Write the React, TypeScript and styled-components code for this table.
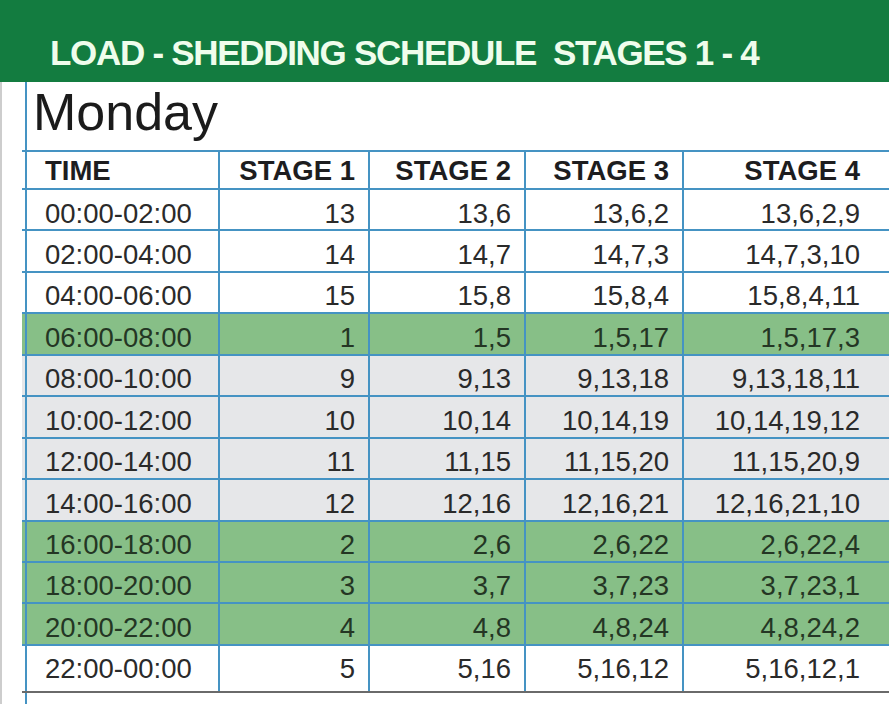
import React from 'react';
import styled, { createGlobalStyle, css } from 'styled-components';

const GlobalStyle = createGlobalStyle`
	html, body {
		margin: 0;
		padding: 0;
		background: #ffffff;
	}
	body {
		font-family: "Liberation Sans", Arial, sans-serif;
		overflow: hidden;
	}
`;

const LINE = '#4593c3';

type Tone = 'white' | 'green' | 'gray';

type Slot = {
	time: string,
	stages: string[],
	tone: Tone,
};

const SLOTS: Slot[] = [
	{ time: '00:00-02:00', stages: ['13', '13,6', '13,6,2', '13,6,2,9'], tone: 'white' },
	{ time: '02:00-04:00', stages: ['14', '14,7', '14,7,3', '14,7,3,10'], tone: 'white' },
	{ time: '04:00-06:00', stages: ['15', '15,8', '15,8,4', '15,8,4,11'], tone: 'white' },
	{ time: '06:00-08:00', stages: ['1', '1,5', '1,5,17', '1,5,17,3'], tone: 'green' },
	{ time: '08:00-10:00', stages: ['9', '9,13', '9,13,18', '9,13,18,11'], tone: 'gray' },
	{ time: '10:00-12:00', stages: ['10', '10,14', '10,14,19', '10,14,19,12'], tone: 'gray' },
	{ time: '12:00-14:00', stages: ['11', '11,15', '11,15,20', '11,15,20,9'], tone: 'gray' },
	{ time: '14:00-16:00', stages: ['12', '12,16', '12,16,21', '12,16,21,10'], tone: 'gray' },
	{ time: '16:00-18:00', stages: ['2', '2,6', '2,6,22', '2,6,22,4'], tone: 'green' },
	{ time: '18:00-20:00', stages: ['3', '3,7', '3,7,23', '3,7,23,1'], tone: 'green' },
	{ time: '20:00-22:00', stages: ['4', '4,8', '4,8,24', '4,8,24,2'], tone: 'green' },
	{ time: '22:00-00:00', stages: ['5', '5,16', '5,16,12', '5,16,12,1'], tone: 'white' },
];

const toneBg: Record<Tone, string> = {
	white: '#ffffff',
	green: '#87bf87',
	gray: '#e6e7e9',
};

const toneInk: Record<Tone, string> = {
	white: '#2a2a2a',
	green: '#243624',
	gray: '#2a2a2a',
};

const Page = styled.div`
	width: 889px;
	height: 704px;
	display: flex;
	flex-direction: column;
	overflow: hidden;
`;

const Banner = styled.header`
	height: 82px;
	flex: none;
	box-sizing: border-box;
	padding: 35px 0 0 50px;
	background: #137c40;
`;

const BannerTitle = styled.h1`
	margin: 0;
	font-size: 35px;
	line-height: 35px;
	font-weight: 700;
	letter-spacing: -1.3px;
	white-space: pre;
	color: #effdec;
`;

const Paper = styled.main`
	flex: 1;
	display: flex;
	padding-left: 23px;
	border-left: 2px solid #cdcdcd;
`;

const Sheet = styled.section`
	flex: 1;
	display: flex;
	flex-direction: column;
	border-left: 2px solid ${LINE};
`;

const DayTitle = styled.h2`
	margin: 0;
	height: 68px;
	box-sizing: border-box;
	padding: 4px 0 0 6px;
	font-size: 52px;
	line-height: 52px;
	font-weight: 400;
	color: #1b1b1b;
`;

const Table = styled.div`
	margin-left: -5px;
	width: 867px;
	border-top: 2px solid ${LINE};
`;

const columns = '198px 150px 156px 158px 205px';

const Row = styled.div<{ $tone: Tone, $height: number, $last?: boolean }>`
	display: grid;
	grid-template-columns: ${columns};
	height: ${p => p.$height}px;
	box-sizing: border-box;
	background: ${p => toneBg[p.$tone]};
	color: ${p => toneInk[p.$tone]};
	border-bottom: 2px solid ${p => (p.$last ? '#6a6a6a' : LINE)};
`;

const headText = css`
	padding-top: 5px;
	font-size: 27.5px;
	line-height: 27.5px;
	font-weight: 700;
	color: #1d1d1f;
`;

const bodyText = css`
	padding-top: 9.5px;
	font-size: 27.5px;
	line-height: 27.5px;
`;

const cellBase = css`
	box-sizing: border-box;
	border-right: 2px solid ${LINE};
	white-space: nowrap;
	&:last-child {
		border-right: none;
		padding-right: 29px;
	}
`;

const TimeCell = styled.div<{ $head?: boolean }>`
	${cellBase}
	padding-left: 23px;
	/* the sheet's blue rule runs through the first cell */
	background-image: linear-gradient(to right, transparent 3px, ${LINE} 3px, ${LINE} 5px, transparent 5px);
	${p => (p.$head ? headText : bodyText)}
`;

const StageCell = styled.div<{ $head?: boolean }>`
	${cellBase}
	text-align: right;
	padding-right: 13px;
	${p => (p.$head ? headText : bodyText)}
`;

const ROW_H = 41.45;

const App: React.FC = () => {
	return (
		<Page>
			<GlobalStyle />
			<Banner>
				<BannerTitle>{'LOAD - SHEDDING SCHEDULE  STAGES 1 - 4'}</BannerTitle>
			</Banner>
			<Paper>
				<Sheet>
					<DayTitle>Monday</DayTitle>
					<Table>
						<Row $tone='white' $height={38}>
							<TimeCell $head>TIME</TimeCell>
							<StageCell $head>STAGE 1</StageCell>
							<StageCell $head>STAGE 2</StageCell>
							<StageCell $head>STAGE 3</StageCell>
							<StageCell $head>STAGE 4</StageCell>
						</Row>
						{SLOTS.map((slot, i) => {
							const last = i === SLOTS.length - 1;
							return (
								<Row key={slot.time} $tone={slot.tone} $height={last ? 47 : ROW_H} $last={last}>
									<TimeCell>{slot.time}</TimeCell>
									{slot.stages.map((s, j) => (
										<StageCell key={j}>{s}</StageCell>
									))}
								</Row>
							);
						})}
					</Table>
				</Sheet>
			</Paper>
		</Page>
	);
};

export default App;
